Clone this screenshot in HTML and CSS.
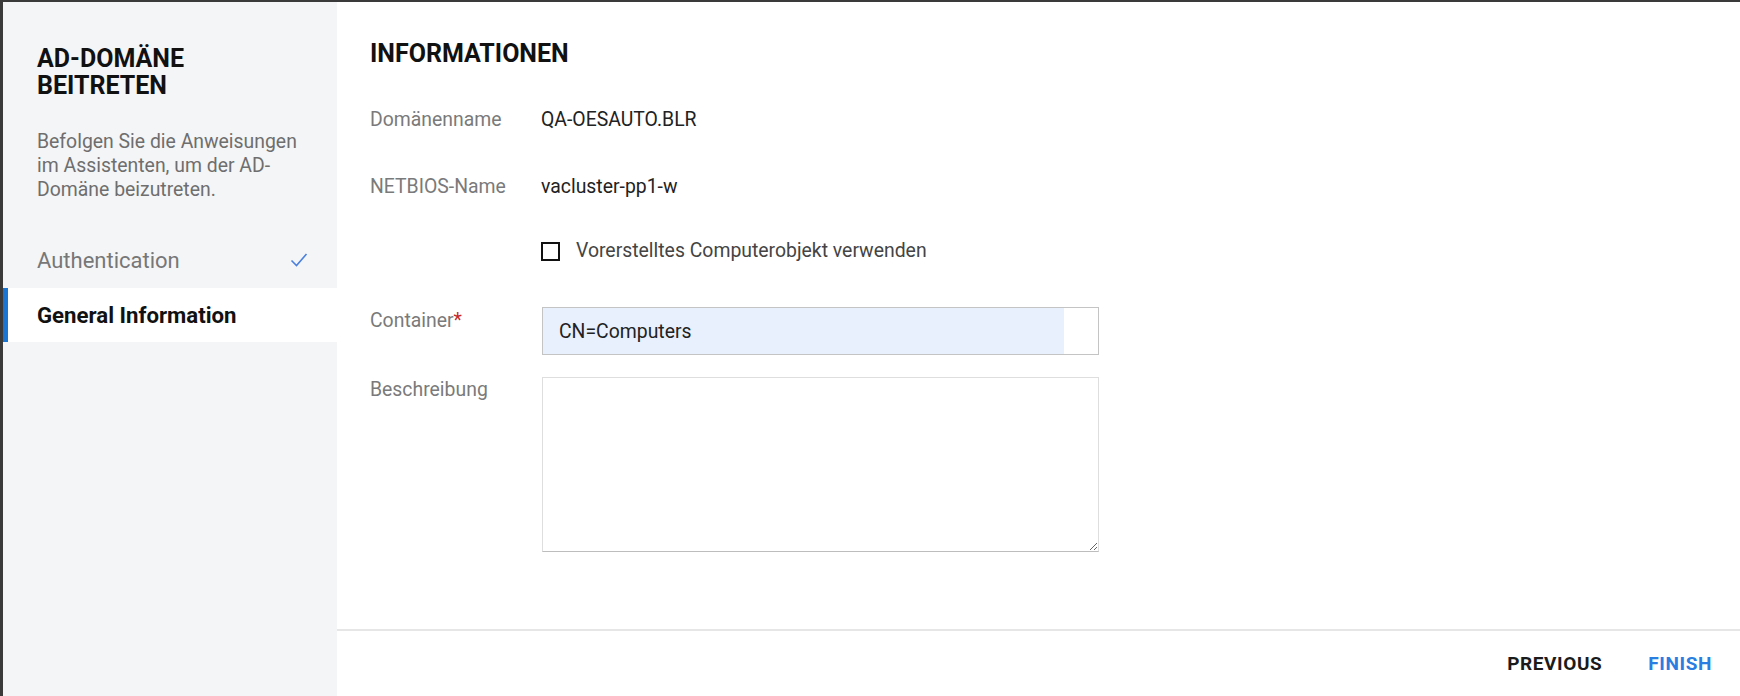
FILE: index.html
```html
<!DOCTYPE html>
<html lang="de">
<head>
<meta charset="utf-8">
<title>AD-Domäne beitreten</title>
<link rel="stylesheet" href="styles.css">
</head>
<body>
<div class="modal">
  <aside class="sidebar">
    <h1 class="side-title">AD-DOMÄNE<br>BEITRETEN</h1>
    <p class="side-desc">Befolgen Sie die Anweisungen im Assistenten, um der AD-Domäne beizutreten.</p>
    <ul class="steps">
      <li class="step done">
        <span>Authentication</span>
        <svg class="check" width="18" height="16" viewBox="0 0 18 16"><path d="M1.5 8.5 L6.5 13.5 L16.5 2" fill="none" stroke="#4a80de" stroke-width="1.6"/></svg>
      </li>
      <li class="step active"><span>General Information</span></li>
    </ul>
  </aside>
  <main class="main">
    <div class="content">
      <h2 class="section-title">INFORMATIONEN</h2>
      <div class="row">
        <div class="label">Domänenname</div>
        <div class="value">QA-OESAUTO.BLR</div>
      </div>
      <div class="row">
        <div class="label">NETBIOS-Name</div>
        <div class="value">vacluster-pp1-w</div>
      </div>
      <div class="row row-check">
        <div class="label"></div>
        <label class="checkbox"><span class="box"></span><span>Vorerstelltes Computerobjekt verwenden</span></label>
      </div>
      <div class="row row-input">
        <div class="label">Container<span class="req">*</span></div>
        <input class="text-input" type="text" value="CN=Computers">
      </div>
      <div class="row row-area">
        <div class="label">Beschreibung</div>
        <textarea class="text-area"></textarea>
      </div>
    </div>
    <footer class="footer">
      <button class="btn btn-prev">PREVIOUS</button>
      <button class="btn btn-finish">FINISH</button>
    </footer>
  </main>
</div>
</body>
</html>
```

FILE: styles.css
```css
* { box-sizing: border-box; }
html, body { margin: 0; padding: 0; }
body {
  background: #3a3a3a;
  width: 1740px;
  height: 696px;
  overflow: hidden;
  padding: 2px 0 0 3px;
  font-family: Roboto, "Liberation Sans", sans-serif;
}
.modal {
  display: flex;
  height: 694px;
  background: #ffffff;
}
.sidebar {
  width: 334px;
  flex: 0 0 334px;
  background: #f4f5f7;
  padding-top: 43px;
}
.side-title {
  margin: 0;
  padding: 0 20px 0 34px;
  font-size: 25px;
  line-height: 27px;
  font-weight: 700;
  color: #111;
}
.side-desc {
  margin: 31px 0 0 0;
  padding: 0 30px 0 34px;
  font-size: 19.4px;
  line-height: 24px;
  color: #6e6e6e;
}
.steps {
  list-style: none;
  margin: 32px 0 0 0;
  padding: 0;
}
.step {
  display: flex;
  align-items: center;
  justify-content: space-between;
  height: 54px;
  padding: 0 29px 0 34px;
  font-size: 22px;
  color: #777;
}
.step.done span { position: relative; top: -1px; }
.step.active {
  background: #fff;
  color: #111;
  font-weight: 700;
  font-size: 22.2px;
  border-left: 5px solid #1976d2;
  padding-left: 29px;
}
.check { display: block; margin-top: -2px; }
.main {
  flex: 1;
  display: flex;
  flex-direction: column;
}
.content {
  flex: 1;
  padding: 36px 0 0 33px;
}
.section-title {
  margin: 0;
  font-size: 25px;
  line-height: 32px;
  font-weight: 700;
  color: #111;
}
.row {
  display: flex;
  align-items: flex-start;
  font-size: 19.4px;
  line-height: 24px;
  margin-top: 43px;
}
.row:first-of-type { margin-top: 38px; }
.label {
  width: 171px;
  flex: 0 0 171px;
  color: #7a7a7a;
}
.req { color: #c62828; }
.value { color: #222; }
.row-check { margin-top: 40px; }
.checkbox {
  display: flex;
  align-items: center;
  gap: 16px;
  color: #444;
}
.box {
  width: 19px;
  height: 19px;
  border: 2.5px solid #111;
  display: block;
}
.row-input { margin-top: 44px; }
.row-input .label { padding-top: 2px; }
.text-input {
  width: 557px;
  height: 48px;
  margin: 0 0 0 1px;
  border: 1px solid #c4c4c4;
  padding: 0 0 0 16px;
  font-family: inherit;
  font-size: 19.4px;
  color: #222;
  background: linear-gradient(to right, #e8f0fe calc(100% - 34px), #ffffff calc(100% - 34px));
  outline: none;
}
.row-area { margin-top: 22px; }
.row-area .label { padding-top: 1px; }
.text-area {
  width: 557px;
  height: 175px;
  margin: 0 0 0 1px;
  border: 1px solid #dedede;
  border-bottom-color: #bdbdbd;
  font-family: inherit;
  font-size: 19px;
  display: block;
}
.footer {
  height: 67px;
  flex: 0 0 67px;
  border-top: 2px solid #e6e6e6;
  display: flex;
  align-items: center;
  justify-content: flex-end;
  gap: 46px;
  padding-right: 28px;
}
.btn {
  background: none;
  border: none;
  padding: 0;
  font-family: inherit;
  font-size: 19px;
  font-weight: 700;
  letter-spacing: 0.6px;
  color: #1b1b1b;
  cursor: pointer;
}
.btn-finish { color: #2a7de1; }
```
